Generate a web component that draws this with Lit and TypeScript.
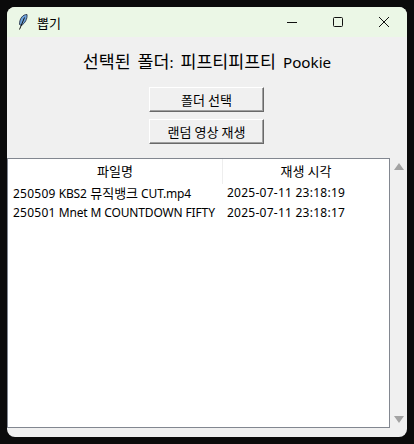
import { LitElement, html, css } from "lit";
import { customElement } from "lit/decorators.js";

const tokens = (text: string) =>
  text.split(/([\uAC00-\uD7A3]+|\d+)/).filter(Boolean).map((t) =>
    /^[\uAC00-\uD7A3]/.test(t)
      ? html`<span class="ko">${t}</span>`
      : /^\d/.test(t)
        ? html`<span class="num">${t}</span>`
        : t
  );

@customElement("app-root")
export class AppRoot extends LitElement {
  static styles = css`
    :host { display: block; width: 414px; height: 444px; background: #0b0b0b; overflow: hidden;
      font-family: "Noto Sans", "Noto Sans CJK KR", sans-serif; color: #000; }
    .ko { font-family: "Noto Sans CJK KR", sans-serif; font-size: 1.085em; }
    .window { margin: 7px 0 0 7px; width: 400px; height: 430px; background: #f0f0f0; border-radius: 8px;
      overflow: hidden; display: flex; flex-direction: column; }
    .titlebar { height: 30px; flex: none; background: #ebf7e6; display: flex; align-items: center; }
    .feather { margin-left: 8px; width: 14px; height: 16px; flex: none; }
    .title-text { margin-left: 8px; font-size: 12px; flex: 1; }
    .ctl { width: 46px; height: 30px; display: flex; align-items: center; justify-content: center; flex: none; }
    .heading { margin-top: 13px; height: 22px; line-height: 22px; text-align: center; font-size: 15.2px; white-space: nowrap; word-spacing: 3px; }
    .heading .ko { font-size: 1.14em; }
    .btns { margin-top: 15px; display: flex; flex-direction: column; align-items: flex-start; gap: 7px; padding-left: 142px; }
    .btn { box-sizing: border-box; width: 115px; height: 25px; background: #f0f0f0; font: inherit; font-size: 12px; padding: 0;
      border: 1px solid; border-color: #fff #696969 #696969 #fff; box-shadow: inset -1px -1px 0 #a0a0a0, inset 1px 1px 0 #f0f0f0; color: #000; }
    .tablewrap { margin-top: 14px; display: flex; height: 270px; }
    .table { box-sizing: border-box; width: 383px; height: 270px; background: #fff; border: 1px solid #828790; font-size: 12px; }
    .row { display: grid; grid-template-columns: 214px 1fr; }
    .head { height: 24px; line-height: 24px; text-align: center; }
    .head span.col + span.col { border-left: 1px solid #eee; }
    .cell { height: 20px; line-height: 20px; padding-left: 5px; white-space: nowrap; overflow: hidden; letter-spacing: -0.14px; }
    .cell .num { letter-spacing: 0.25px; }
    .cell .ko { letter-spacing: 0; }
    .cell.date { letter-spacing: 0.25px; }
    .scroll { flex: 1; display: flex; flex-direction: column; align-items: center; justify-content: space-between; padding: 5px 0; }
  `;
  render() {
    const rows = [
      ["250509 KBS2 뮤직뱅크 CUT.mp4", "2025-07-11 23:18:19"],
      ["250501 Mnet M COUNTDOWN FIFTY", "2025-07-11 23:18:17"],
    ];
    return html`<div class="window">
      <div class="titlebar">
        <svg class="feather" viewBox="0 0 14 16">
          <path d="M12 .5 C8 .5 4.5 4 4.5 10.5 L6.5 11.5 C10 9 12.5 5 12 .5Z" fill="#6ea3dc" stroke="#26324a" stroke-width=".9"/>
          <path d="M9.5 3.5 L4.5 15.5" stroke="#111" stroke-width="1" fill="none"/>
        </svg>
        <span class="title-text">${tokens("뽑기")}</span>
        <div class="ctl"><svg width="12" height="12" viewBox="0 0 12 12"><path d="M1 6.5H11" stroke="#111" stroke-width="1"/></svg></div>
        <div class="ctl"><svg width="12" height="12" viewBox="0 0 12 12"><rect x="1.5" y="1.5" width="9" height="9" rx="1" fill="none" stroke="#111"/></svg></div>
        <div class="ctl"><svg width="12" height="12" viewBox="0 0 12 12"><path d="M1 1L11 11M11 1L1 11" stroke="#111" stroke-width="1"/></svg></div>
      </div>
      <div class="heading">${tokens("선택된 폴더: 피프티피프티 Pookie")}</div>
      <div class="btns">
        <button class="btn">${tokens("폴더 선택")}</button>
        <button class="btn">${tokens("랜덤 영상 재생")}</button>
      </div>
      <div class="tablewrap">
        <div class="table">
          <div class="row head"><span class="col">${tokens("파일명")}</span><span class="col">${tokens("재생 시각")}</span></div>
          ${rows.map((r) => html`<div class="row"><div class="cell">${tokens(r[0])}</div><div class="cell date">${r[1]}</div></div>`)}
        </div>
        <div class="scroll">
          <svg width="10" height="7" viewBox="0 0 10 7"><path d="M5 0L10 7H0Z" fill="#a3a3a3"/></svg>
          <svg width="10" height="7" viewBox="0 0 10 7"><path d="M0 0H10L5 7Z" fill="#a3a3a3"/></svg>
        </div>
      </div>
    </div>`;
  }
}
